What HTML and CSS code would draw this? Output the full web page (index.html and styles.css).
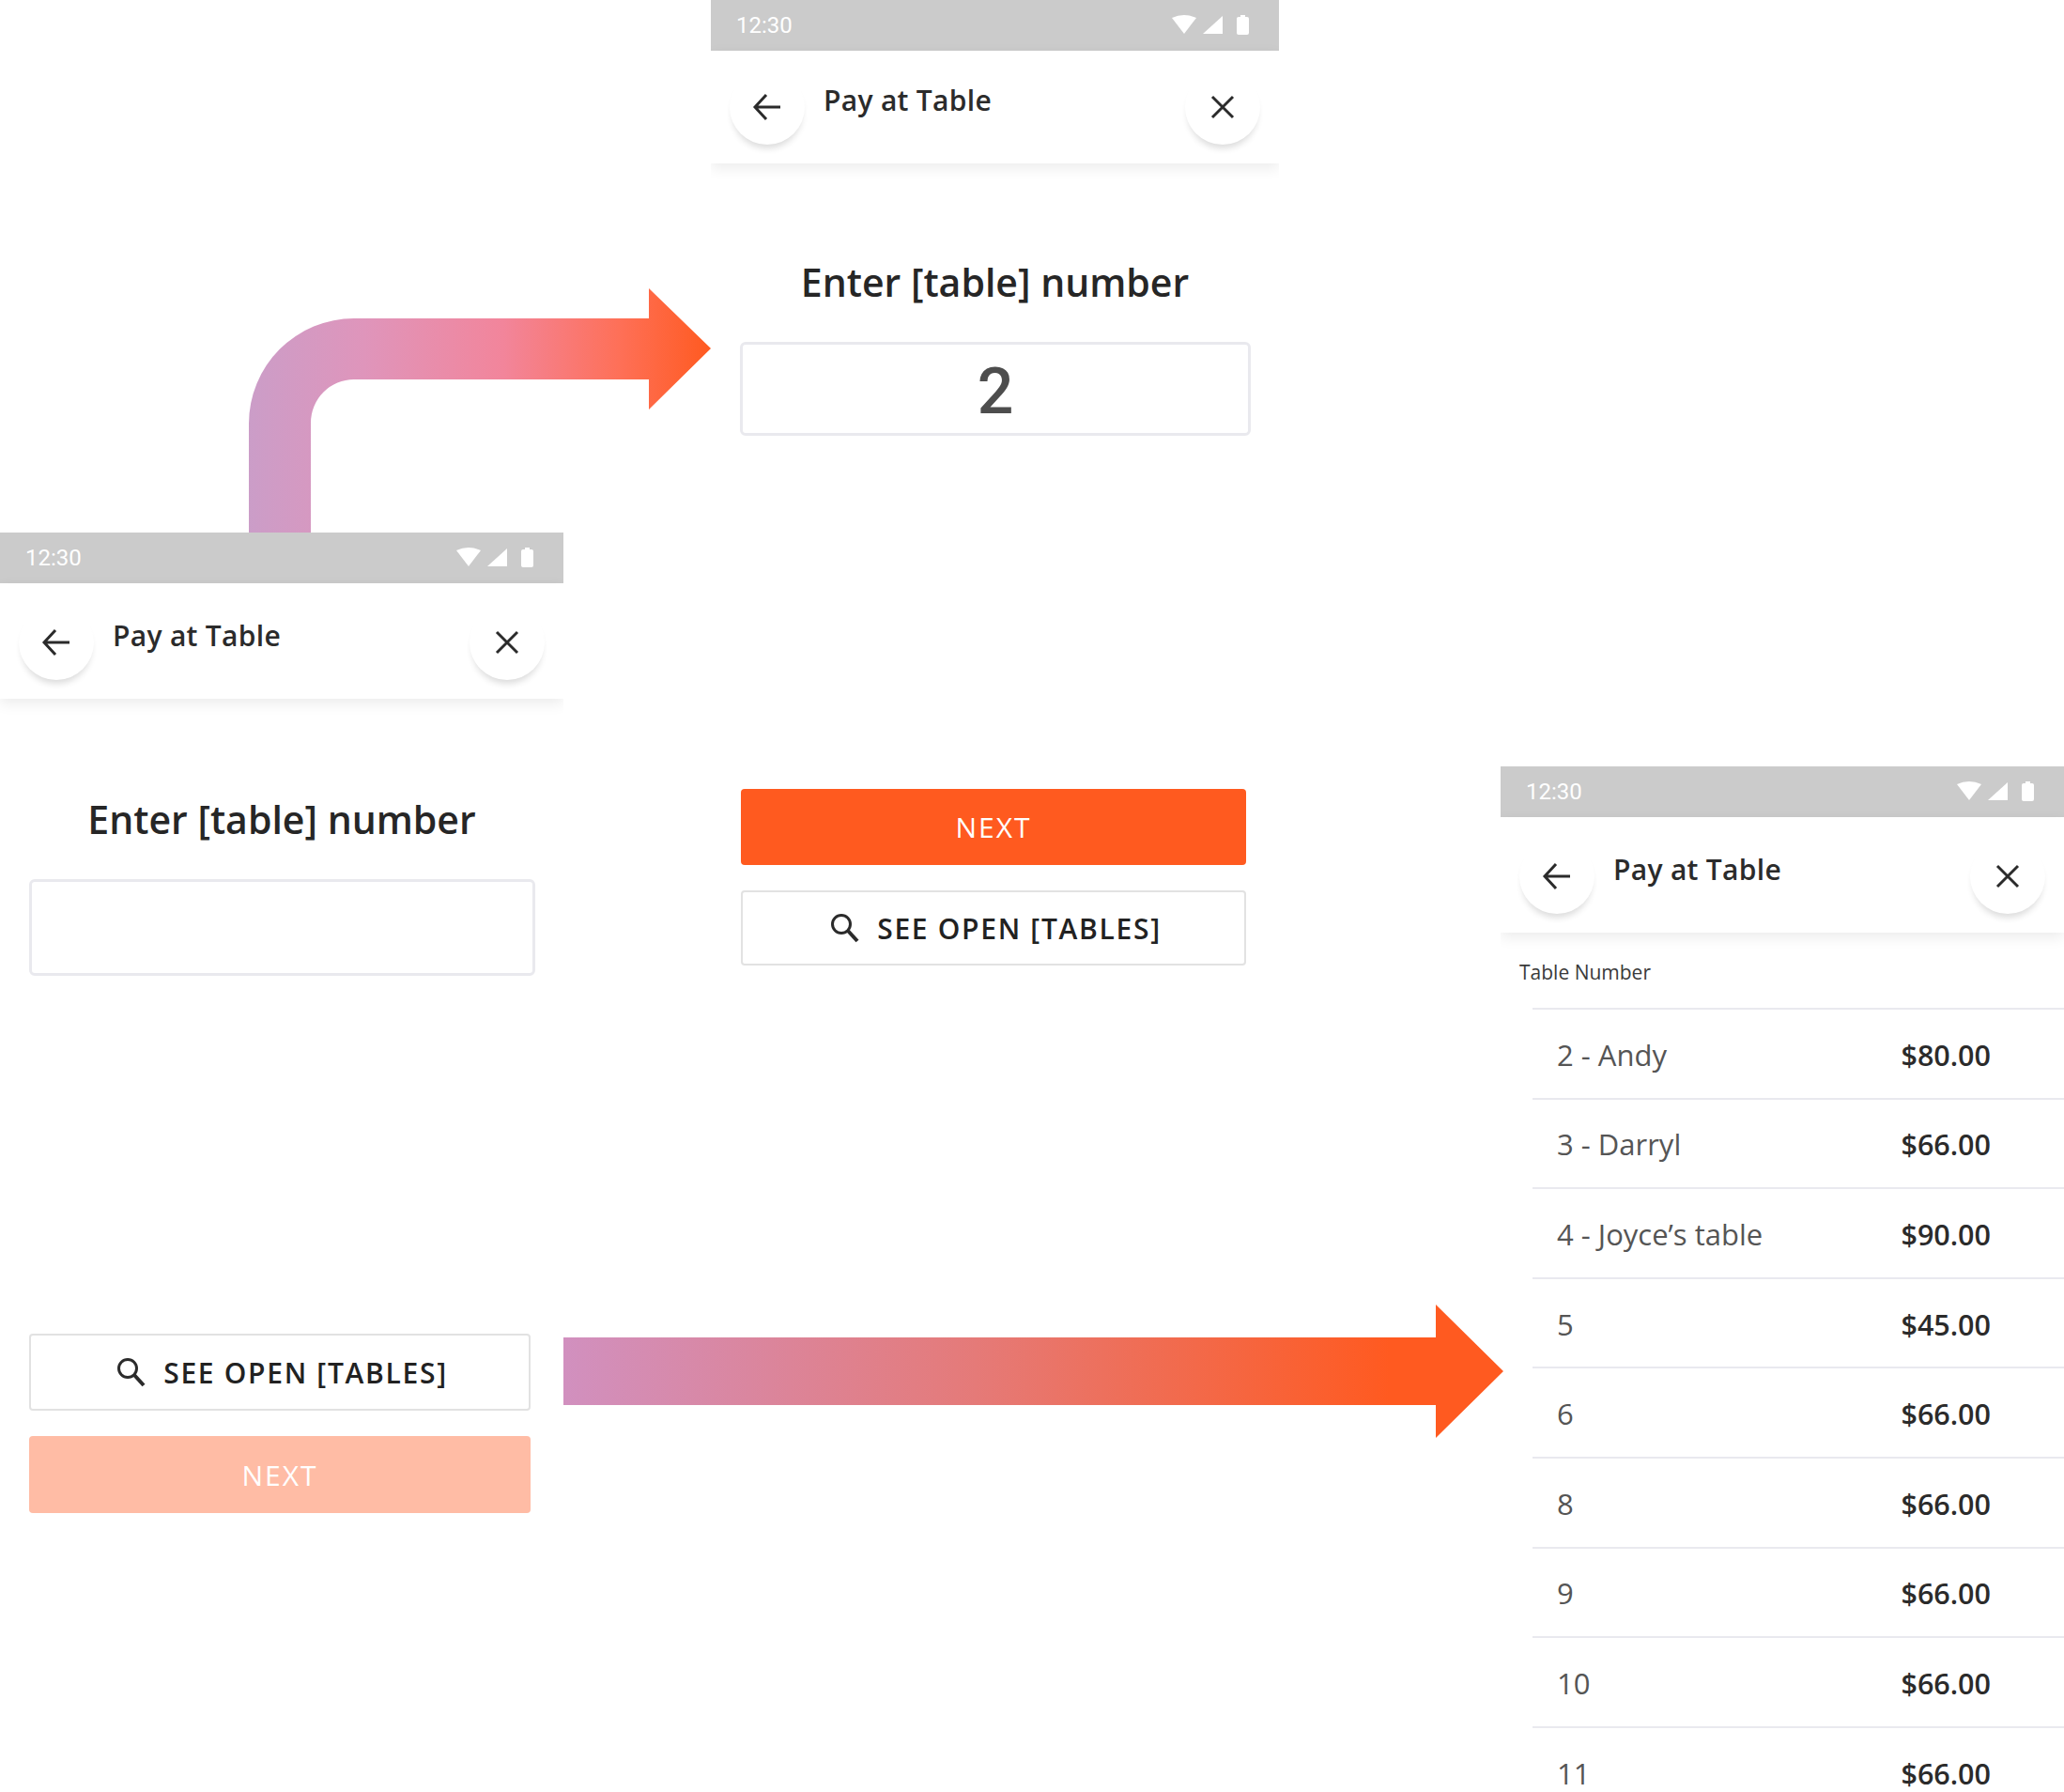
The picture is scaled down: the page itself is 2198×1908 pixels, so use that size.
FILE: index.html
```html
<!DOCTYPE html>
<html lang="en">
<head>
<meta charset="utf-8">
<title>Pay at Table</title>
<link rel="stylesheet" href="styles.css">
</head>
<body>
<svg class="canvas-arrows" width="2198" height="1908" viewBox="0 0 2198 1908">
  <defs>
    <linearGradient id="gradUp" gradientUnits="userSpaceOnUse" x1="265" y1="0" x2="757" y2="0">
      <stop offset="0" stop-color="#cb9dc8"/>
      <stop offset="0.25" stop-color="#df95bb"/>
      <stop offset="0.55" stop-color="#f2859b"/>
      <stop offset="0.8" stop-color="#fe7058"/>
      <stop offset="1" stop-color="#ff5a20"/>
    </linearGradient>
    <linearGradient id="gradRight" gradientUnits="userSpaceOnUse" x1="600" y1="0" x2="1480" y2="0">
      <stop offset="0" stop-color="#d190bf"/>
      <stop offset="0.5" stop-color="#e57a78"/>
      <stop offset="1" stop-color="#ff5a20"/>
    </linearGradient>
  </defs>
  <path fill="url(#gradUp)" d="M265 567V451A112 112 0 0 1 377 339H691V307L757 371L691 436V404H377A46 46 0 0 0 331 450V567Z"/>
  <path fill="url(#gradRight)" d="M600 1424H1529V1389L1601 1460L1529 1531V1496H600Z"/>
</svg>

<section class="phone phone-a">
  <div class="status">
    <span class="clock">12:30</span>
    <svg class="status-icons" width="84" height="24" viewBox="0 0 84 24"><path fill="#fff" d="M0 4Q13-2 26 4L13 21Z"/><path fill="#fff" d="M33 21L54 2V21Z"/><path fill="#fff" d="M69 5Q69 3 71 3H73V1H78V3H80Q82 3 82 5V20Q82 22 80 22H71Q69 22 69 20Z"/></svg>
  </div>
  <header class="bar">
    <button class="round"><svg width="32" height="32" viewBox="0 0 32 32"><path fill="none" stroke="#2b2b2b" stroke-width="3" d="M30 16H4M15 3L3 16L15 29"/></svg></button>
    <h1 class="title">Pay at Table</h1>
    <button class="round"><svg width="28" height="28" viewBox="0 0 28 28"><path fill="none" stroke="#2b2b2b" stroke-width="3" d="M3 3L25 25M25 3L3 25"/></svg></button>
  </header>
  <h2 class="heading heading-a">Enter [table] number</h2>
  <div class="field field-a"></div>
  <div class="actions actions-a">
    <div class="btn btn-outline"><svg width="32" height="32" viewBox="0 0 32 32"><circle cx="12" cy="12" r="9.5" fill="none" stroke="#2b2b2b" stroke-width="3"/><path stroke="#2b2b2b" stroke-width="4" d="M19 19L29 30"/></svg><span>SEE OPEN [TABLES]</span></div>
    <div class="btn btn-disabled"><span>NEXT</span></div>
  </div>
</section>

<section class="phone phone-b">
  <div class="status">
    <span class="clock">12:30</span>
    <svg class="status-icons" width="84" height="24" viewBox="0 0 84 24"><path fill="#fff" d="M0 4Q13-2 26 4L13 21Z"/><path fill="#fff" d="M33 21L54 2V21Z"/><path fill="#fff" d="M69 5Q69 3 71 3H73V1H78V3H80Q82 3 82 5V20Q82 22 80 22H71Q69 22 69 20Z"/></svg>
  </div>
  <header class="bar bar-b">
    <button class="round"><svg width="32" height="32" viewBox="0 0 32 32"><path fill="none" stroke="#2b2b2b" stroke-width="3" d="M30 16H4M15 3L3 16L15 29"/></svg></button>
    <h1 class="title">Pay at Table</h1>
    <button class="round"><svg width="28" height="28" viewBox="0 0 28 28"><path fill="none" stroke="#2b2b2b" stroke-width="3" d="M3 3L25 25M25 3L3 25"/></svg></button>
  </header>
  <h2 class="heading heading-b">Enter [table] number</h2>
  <div class="field field-b"><span class="digit">2</span></div>
  <div class="actions actions-b">
    <div class="btn btn-primary"><span>NEXT</span></div>
    <div class="btn btn-outline"><svg width="32" height="32" viewBox="0 0 32 32"><circle cx="12" cy="12" r="9.5" fill="none" stroke="#2b2b2b" stroke-width="3"/><path stroke="#2b2b2b" stroke-width="4" d="M19 19L29 30"/></svg><span>SEE OPEN [TABLES]</span></div>
  </div>
</section>

<section class="phone phone-c">
  <div class="status">
    <span class="clock">12:30</span>
    <svg class="status-icons" width="84" height="24" viewBox="0 0 84 24"><path fill="#fff" d="M0 4Q13-2 26 4L13 21Z"/><path fill="#fff" d="M33 21L54 2V21Z"/><path fill="#fff" d="M69 5Q69 3 71 3H73V1H78V3H80Q82 3 82 5V20Q82 22 80 22H71Q69 22 69 20Z"/></svg>
  </div>
  <header class="bar">
    <button class="round"><svg width="32" height="32" viewBox="0 0 32 32"><path fill="none" stroke="#2b2b2b" stroke-width="3" d="M30 16H4M15 3L3 16L15 29"/></svg></button>
    <h1 class="title">Pay at Table</h1>
    <button class="round"><svg width="28" height="28" viewBox="0 0 28 28"><path fill="none" stroke="#2b2b2b" stroke-width="3" d="M3 3L25 25M25 3L3 25"/></svg></button>
  </header>
  <div class="list-label">Table Number</div>
  <ul class="list">
    <li class="row"><span class="name">2 - Andy</span><span class="price">$80.00</span></li>
    <li class="row"><span class="name">3 - Darryl</span><span class="price">$66.00</span></li>
    <li class="row"><span class="name">4 - Joyce’s table</span><span class="price">$90.00</span></li>
    <li class="row"><span class="name">5</span><span class="price">$45.00</span></li>
    <li class="row"><span class="name">6</span><span class="price">$66.00</span></li>
    <li class="row"><span class="name">8</span><span class="price">$66.00</span></li>
    <li class="row"><span class="name">9</span><span class="price">$66.00</span></li>
    <li class="row"><span class="name">10</span><span class="price">$66.00</span></li>
    <li class="row"><span class="name">11</span><span class="price">$66.00</span></li>
  </ul>
</section>
</body>
</html>
```
FILE: styles.css
```css
* { box-sizing: border-box; }
html, body { margin: 0; padding: 0; background: #fff; }
body {
  position: relative;
  width: 2198px;
  height: 1908px;
  overflow: hidden;
  font-family: "Open Sans", "Noto Sans", sans-serif;
  color: #2b2b2b;
}
.canvas-arrows { position: absolute; left: 0; top: 0; }

.phone { position: absolute; display: flex; flex-direction: column; overflow: hidden; padding-bottom: 20px; }
.phone-a { left: 0; top: 567px; width: 600px; }
.phone-b { left: 757px; top: 0; width: 605px; }
.phone-c { left: 1598px; top: 816px; width: 600px; height: 1092px; padding-bottom: 0; }

.status {
  display: flex;
  align-items: center;
  justify-content: space-between;
  height: 54px;
  padding: 0 30px 0 27px;
  background: #cbcbcb;
  flex: none;
}
.clock { font-family: Roboto, sans-serif; font-size: 24px; color: #fff; }
.status-icons { display: block; }

.bar {
  display: flex;
  align-items: flex-start;
  flex: none;
  height: 123px;
  padding: 23px 20px 0;
  background: #fff;
  box-shadow: 0 5px 14px rgba(0, 0, 0, 0.08);
  position: relative;
}
.bar-b { height: 120px; padding-top: 20px; }
.round {
  display: flex;
  align-items: center;
  justify-content: center;
  width: 80px;
  height: 80px;
  padding: 0;
  border: 0;
  border-radius: 50%;
  background: #fff;
  box-shadow: 0 7px 7px -3px rgba(0, 0, 0, 0.14);
  flex: none;
}
.title {
  margin: 13px auto 0 20px;
  font-size: 30px;
  line-height: 40px;
  font-weight: 600;
  letter-spacing: 0.3px;
  color: #2b2b2b;
}

.heading {
  margin: 0;
  text-align: center;
  font-size: 41px;
  line-height: 54px;
  font-weight: 600;
  color: #262626;
}
.heading-a { margin-top: 101px; }
.heading-b { margin-top: 99px; }

.field {
  display: flex;
  align-items: center;
  justify-content: center;
  margin: 0 30px 0 31px;
  border: 3px solid #e9e9ee;
  border-radius: 6px;
  background: #fff;
}
.field-a { margin-top: 37px; height: 103px; }
.field-b { margin-top: 37px; height: 100px; }
.digit { font-family: Roboto, sans-serif; font-size: 68px; font-weight: 500; color: #4d4d4d; padding-top: 6px; }

.actions { display: flex; flex-direction: column; gap: 27px; }
.actions-a { margin: 381px 35px 0 31px; }
.actions-b { margin: 376px 35px 0 32px; }

.btn {
  display: flex;
  align-items: center;
  justify-content: center;
  gap: 18px;
  height: 82px;
  border-radius: 4px;
  font-size: 30px;
  font-weight: 500;
  letter-spacing: 2px;
}
.btn-outline { background: #fff; border: 2px solid #e2e2e2; color: #222; font-weight: 600; letter-spacing: 1.7px; padding-left: 5px; }
.btn-primary { background: #ff5a1f; color: #fff; }
.btn-disabled { background: #ffbca5; color: #fff; }
.actions-b .btn-primary { height: 81px; }
.actions-b .btn-outline { height: 80px; }

.list-label {
  flex: none;
  padding: 23px 0 0 20px;
  height: 80px;
  font-size: 21px;
  line-height: 38px;
  color: #3a3a3a;
}
.list { list-style: none; margin: 0 0 0 34px; padding: 0; }
.row {
  display: flex;
  align-items: center;
  justify-content: space-between;
  height: 95.6px;
  padding: 2px 78px 0 26px;
  border-top: 2px solid #e9e9ef;
}
.name { font-size: 31px; color: #555; }
.price { font-size: 30.5px; font-weight: 600; color: #2b2b2b; }
```
